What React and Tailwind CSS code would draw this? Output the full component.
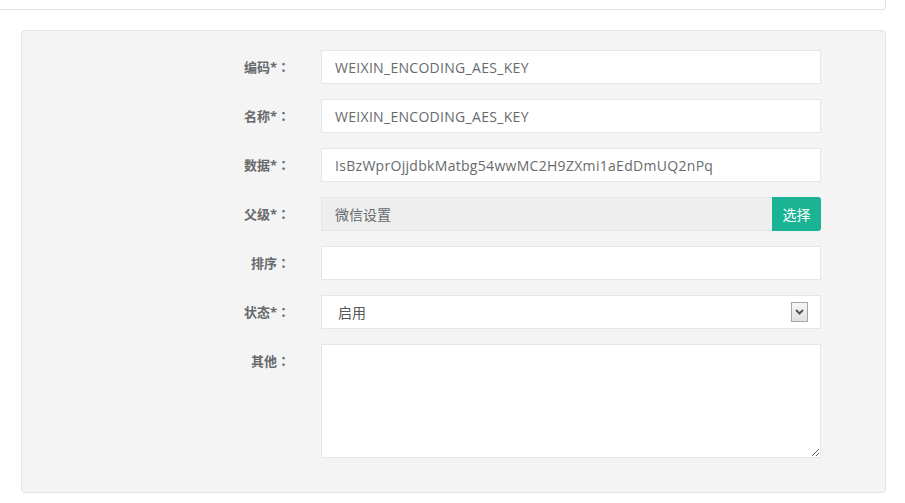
import { useState } from 'react';

const fields = [
  { label: '编码*', value: 'WEIXIN_ENCODING_AES_KEY' },
  { label: '名称*', value: 'WEIXIN_ENCODING_AES_KEY' },
  { label: '数据*', value: 'IsBzWprOjjdbkMatbg54wwMC2H9ZXmi1aEdDmUQ2nPq' },
];

const font = { fontFamily: '"Open Sans", "Noto Sans CJK SC", sans-serif' };

// 冒号用繁体字形，让全角冒号居中显示
function Label({ children }) {
  return (
    <label className="w-[268px] shrink-0 text-right text-[13px] font-bold leading-[34px] text-[#676a6c]">
      {children}
      <span className="font-['Noto_Sans_CJK_TC',sans-serif]">：</span>
    </label>
  );
}

const inputCls =
  'h-[34px] w-[500px] border border-[#e5e6e7] bg-white px-[13px] text-[14px] tracking-[0.3px] text-[#676a6c] outline-none';

function App() {
  const [status, setStatus] = useState('1');

  return (
    <div className="min-h-[503px] bg-white" style={font}>
      <div className="h-[10px] w-[886px] rounded-br-[4px] border-b border-r border-[#e1e1e1] bg-white" />

      <div className="ml-[21px] mt-[20px] w-[865px] rounded-[4px] border border-[#e3e3e3] bg-[#f4f4f4] pb-[34px] pt-[19px]">
        <form className="flex flex-col gap-[15px]">
          {fields.map((f, i) => (
            <div key={i} className="flex items-start gap-[31px]">
              <Label>{f.label}</Label>
              <input readOnly value={f.value} className={inputCls} />
            </div>
          ))}

          <div className="flex items-start gap-[31px]">
            <Label>父级*</Label>
            <div className="flex w-[500px]">
              <input
                readOnly
                value="微信设置"
                className="h-[34px] flex-1 border border-r-0 border-[#e5e6e7] bg-[#eeeeee] px-[13px] text-[14px] text-[#676a6c] outline-none"
              />
              <button
                type="button"
                className="h-[34px] w-[49px] rounded-r-[3px] bg-[#1ab394] text-[14px] text-white"
              >
                选择
              </button>
            </div>
          </div>

          <div className="flex items-start gap-[31px]">
            <Label>排序</Label>
            <input className={inputCls} />
          </div>

          <div className="flex items-start gap-[31px]">
            <Label>状态*</Label>
            <div className="relative h-[34px] w-[500px] border border-[#e5e6e7] bg-white">
              <select
                value={status}
                onChange={(e) => setStatus(e.target.value)}
                className="h-full w-full appearance-none bg-transparent pl-[16px] text-[14px] text-[#555] outline-none"
              >
                <option value="1">启用</option>
                <option value="0">禁用</option>
              </select>
              <span className="pointer-events-none absolute right-[12px] top-[6px] flex h-[20px] w-[17px] items-center justify-center border border-[#a6a6a6] bg-gradient-to-b from-[#f6f6f6] to-[#e2e2e2]">
                <svg width="9" height="6" viewBox="0 0 9 6">
                  <path d="M1 1 L4.5 4.5 L8 1" fill="none" stroke="#555" strokeWidth="2" />
                </svg>
              </span>
            </div>
          </div>

          <div className="flex items-start gap-[31px]">
            <Label>其他</Label>
            <textarea className="block h-[114px] w-[500px] border border-[#e5e6e7] bg-white px-[13px] py-[6px] text-[14px] text-[#676a6c] outline-none" />
          </div>
        </form>
      </div>
    </div>
  );
}

export default App;
